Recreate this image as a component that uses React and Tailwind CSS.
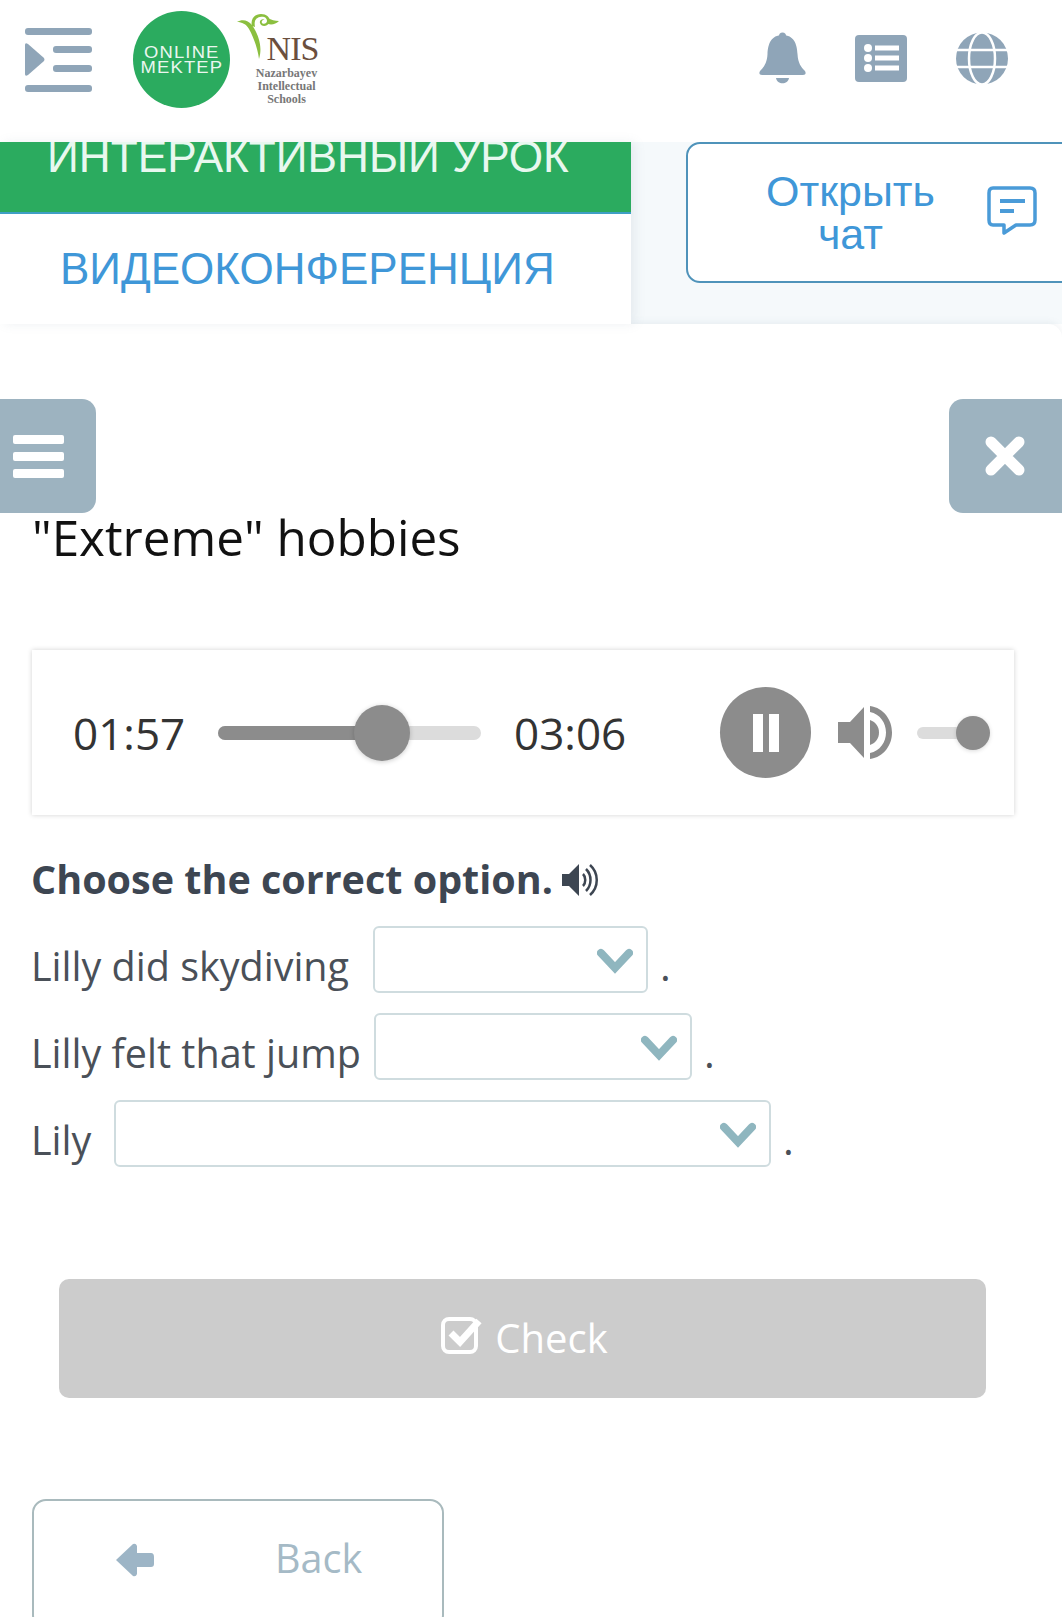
import React from "react";

const sans = "font-['Liberation_Sans',Arial,sans-serif]";
const open = "font-['Open_Sans','Noto_Sans',sans-serif]";

function MenuIcon() {
  return (
    <svg width="68" height="66" viewBox="0 0 68 66" fill="#8fa5b8">
      <rect x="0" y="0" width="67" height="7" rx="3" />
      <rect x="28" y="18" width="39" height="7" rx="3" />
      <rect x="28" y="37" width="39" height="7" rx="3" />
      <rect x="0" y="57" width="67" height="7" rx="3" />
      <path d="M0 17 Q0 14 3 16 L19 30 Q20 32 19 33 L3 47 Q0 49 0 46 Z" />
    </svg>
  );
}

function Sprout() {
  return (
    <svg width="44" height="46" viewBox="0 0 44 46" fill="#8bbf3f">
      <path d="M0 8 C5 5 11 6 15 11 C21 20 26 32 22 45 C21 36 17 24 12 15 C9 10 5 8 0 8 Z" />
      <path d="M15 12 C13 5 18 0 24 0 C31 0 34 5 32 9 C30 13 24 13 23 9 C22 6 26 4 28 6 C26 5 24 7 25 9 C27 11 30 9 30 7 C30 3 26 2 23 3 C18 4 17 8 18 13 Z" />
      <path d="M31 4 C34 6 38 7 42 7 C39 10 35 11 31 10 Z" />
    </svg>
  );
}

function Bell() {
  return (
    <svg width="47" height="53" viewBox="0 0 47 53" fill="#8fa5b8">
      <circle cx="23.5" cy="4" r="3.5" />
      <path d="M23.5 3 C12 3 9 12 8.5 22 C8 31 5 35 1 39 Q-1 43 3 43 L44 43 Q48 43 46 39 C42 35 39 31 38.5 22 C38 12 35 3 23.5 3 Z" />
      <path d="M17 46 L30 46 C29 53 18 53 17 46 Z" />
    </svg>
  );
}

function ListBox() {
  return (
    <svg width="52" height="47" viewBox="0 0 52 47">
      <rect width="52" height="47" rx="4" fill="#8fa5b8" />
      <g fill="#fff">
        <circle cx="13" cy="13" r="4" />
        <circle cx="13" cy="23" r="4" />
        <circle cx="13" cy="33" r="4" />
        <rect x="20" y="10.5" width="24" height="5" />
        <rect x="20" y="20.5" width="24" height="5" />
        <rect x="20" y="30.5" width="24" height="5" />
      </g>
    </svg>
  );
}

function Globe() {
  return (
    <svg width="52" height="53" viewBox="0 0 52 53">
      <circle cx="26" cy="26.5" r="26" fill="#8fa5b8" />
      <g fill="none" stroke="#fff" strokeWidth="2.5">
        <ellipse cx="26" cy="26.5" rx="13" ry="26" />
        <path d="M0 18 H52 M0 35 H52" />
      </g>
    </svg>
  );
}

function ChatIcon() {
  return (
    <svg width="50" height="50" viewBox="0 0 50 50" fill="none" stroke="#4a9bd8">
      <path d="M6 2 H43 Q48 2 48 7 V34 Q48 39 43 39 H29 L17 47 V39 H6 Q2 39 2 34 V7 Q2 2 6 2 Z" strokeWidth="3.5" strokeLinejoin="round" />
      <path d="M13 15 H38" strokeWidth="4" />
      <path d="M13 25 H27" strokeWidth="4" />
    </svg>
  );
}

function BurgerIcon() {
  return (
    <div className="flex flex-col gap-[8px]">
      <div className="w-[51px] h-[9px] bg-white rounded-[2px]" />
      <div className="w-[51px] h-[9px] bg-white rounded-[2px]" />
      <div className="w-[51px] h-[9px] bg-white rounded-[2px]" />
    </div>
  );
}

function CloseIcon() {
  return (
    <svg width="40" height="40" viewBox="0 0 40 40" stroke="#fff" strokeWidth="11" strokeLinecap="round">
      <path d="M6 6 L34 34 M34 6 L6 34" />
    </svg>
  );
}

function Speaker() {
  return (
    <svg width="54" height="53" viewBox="0 0 54 53" fill="#8c8c8c">
      <path d="M0 16 H12 L26 1 V52 L12 37 H0 Z" />
      <path d="M32 0 C46 2 54 14 54 26.5 C54 39 46 51 32 53 V47 C42 45 48 36 48 26.5 C48 17 42 8 32 6 Z" />
      <path d="M32 14 C38 16 41 21 41 26.5 C41 32 38 37 32 39 Z" />
    </svg>
  );
}

function SmallSpeaker() {
  return (
    <svg width="38" height="34" viewBox="0 0 38 34" fill="#3d4652">
      <path d="M0 11 H7 L17 1 V33 L7 23 H0 Z" />
      <g fill="none" stroke="#3d4652" strokeWidth="2.5">
        <path d="M21 11 C24 14 24 20 21 23" />
        <path d="M24 6 C30 12 30 22 24 28" />
        <path d="M28 2 C37 10 37 24 28 32" />
      </g>
    </svg>
  );
}

function Chevron() {
  return (
    <svg width="36" height="26" viewBox="0 0 36 26" fill="none" stroke="#8fb6bf" strokeWidth="8" strokeLinecap="round" strokeLinejoin="miter">
      <path d="M4 5 L18 20 L32 5" />
    </svg>
  );
}

function CheckIcon() {
  return (
    <svg width="42" height="37" viewBox="0 0 42 37" fill="none">
      <rect x="2" y="2" width="33" height="33" rx="6" stroke="#fff" strokeWidth="4" />
      <path d="M10 16 L19 25 L38 4" stroke="#fff" strokeWidth="7" />
    </svg>
  );
}

function BackArrow() {
  return (
    <svg width="40" height="34" viewBox="0 0 40 34" fill="#9db5c6">
      <path d="M18 1 L1 17 L18 33 Q21 34 22 31 L22 24 H36 Q39 24 39 21 V14 Q39 10 36 10 H22 V3 Q21 0 18 1 Z" />
    </svg>
  );
}

function Row({ label, width, gap, mb }) {
  return (
    <div className={`flex items-start h-[67px] ${mb}`}>
      <span className={`shrink-0 whitespace-nowrap text-[39.5px] leading-[67px] text-[#4a5058] pt-[7px] ${gap}`}>{label}</span>
      <div className={`h-[67px] ${width} border-2 border-[#cfdcdf] rounded-[6px] bg-white flex items-start justify-end pr-[13px] pt-[20px]`}>
        <Chevron />
      </div>
      <span className="text-[41px] leading-[67px] text-[#4a5058] pl-[12px] pt-[6px]">.</span>
    </div>
  );
}

export default function App() {
  return (
    <div className={`w-[1062px] h-[1617px] overflow-hidden bg-white ${open}`}>
      <header className="h-[142px] bg-white flex items-start">
        <div className="ml-[25px] mt-[28px] w-[108px]"><MenuIcon /></div>
        <div className={`mt-[11px] w-[97px] h-[97px] rounded-full bg-[#2bab5f] flex flex-col items-center justify-center text-white text-[16px] leading-[15px] tracking-[1px] ${sans}`}>
          <span className="scale-x-[1.15] opacity-90">ONLINE</span>
          <span className="scale-x-[1.15] opacity-90">MEKTEP</span>
        </div>
        <div className="relative ml-[7px] mt-[14px] w-[86px] h-[92px] flex flex-col items-center font-['Liberation_Serif',serif]">
          <div className="absolute left-0 top-0"><Sprout /></div>
          <span className="pl-[25px] pt-[21px] text-[34px] leading-[28px] text-[#6b4f3e] tracking-[-1px]">NIS</span>
          <span className="pl-[13px] mt-[4px] text-[12px] leading-[13px] text-[#777] font-bold text-center whitespace-nowrap">Nazarbayev<br />Intellectual<br />Schools</span>
        </div>
        <div className="ml-auto mr-[54px] mt-[32px] flex items-center gap-[49px]">
          <Bell />
          <ListBox />
          <Globe />
        </div>
      </header>

      <section className={`flex h-[182px] bg-[#f5f9fb] ${sans}`}>
        <div className="w-[631px] shrink-0 bg-white shadow-[4px_0_10px_rgba(120,140,160,0.12)]">
          <div className="h-[72px] bg-[#2bab5f] border-b-2 border-[#3f9fc4] overflow-hidden">
            <p className="mt-[-11px] ml-[47px] text-[44.2px] leading-[52px] text-[#e8f8ef] whitespace-nowrap">ИНТЕРАКТИВНЫЙ УРОК</p>
          </div>
          <p className="mt-[29px] ml-[60px] text-[44px] leading-[52px] text-[#3f97d8] whitespace-nowrap">ВИДЕОКОНФЕРЕНЦИЯ</p>
        </div>
        <div className="ml-[55px] w-[420px] shrink-0 h-[141px] bg-white border-2 border-[#4f93ba] rounded-[14px] flex items-center">
          <div className="w-[299px] shrink-0 pl-[26px] text-center text-[#3f97d8] text-[43px] leading-[43px] whitespace-nowrap">Открыть<br />чат</div>
          <div className="mt-[-4px]"><ChatIcon /></div>
        </div>
      </section>

      <main className="bg-white rounded-tr-[14px] shadow-[0_-2px_6px_rgba(120,140,160,0.1)] h-[1293px]">
        <div className="pt-[75px] flex justify-between">
          <div className="w-[96px] h-[114px] bg-[#9db3c0] rounded-r-[14px] flex items-center pl-[13px]"><BurgerIcon /></div>
          <div className="w-[113px] h-[114px] bg-[#9db3c0] rounded-l-[14px] flex items-center pl-[36px]"><CloseIcon /></div>
        </div>

        <h1 className="ml-[32px] text-[49.4px] leading-[58px] text-[#111] font-normal mt-[-5px]">"Extreme" hobbies</h1>

        <div className="ml-[32px] mt-[84px] w-[982px] h-[165px] bg-white shadow-[0_0_5px_rgba(0,0,0,0.18)] flex items-center text-[#333]">
          <span className="ml-[41px] w-[145px] shrink-0 text-[44px] leading-[50px]">01:57</span>
          <div className="w-[263px] shrink-0 h-[14px] bg-[#dcdcdc] rounded-full flex items-center">
            <div className="w-[164px] shrink-0 h-[14px] bg-[#8c8c8c] rounded-full" />
            <div className="ml-[-28px] w-[56px] h-[56px] shrink-0 rounded-full bg-[#8c8c8c] shadow-[0_1px_5px_rgba(0,0,0,0.2)]" />
          </div>
          <span className="ml-[33px] w-[206px] shrink-0 text-[44px] leading-[50px]">03:06</span>
          <div className="w-[91px] h-[91px] rounded-full bg-[#8c8c8c] flex items-center justify-center gap-[6px] shrink-0">
            <div className="w-[10px] h-[38px] bg-white" />
            <div className="w-[10px] h-[38px] bg-white" />
          </div>
          <div className="ml-[27px]"><Speaker /></div>
          <div className="ml-[25px] w-[64px] shrink-0 h-[12px] bg-[#dcdcdc] rounded-full flex items-center justify-end">
            <div className="mr-[-9px] w-[34px] h-[34px] shrink-0 rounded-full bg-[#8c8c8c] shadow-[0_1px_4px_rgba(0,0,0,0.15)]" />
          </div>
        </div>

        <div className="ml-[31px] mt-[34px] flex items-center h-[60px]">
          <h2 className="text-[39.5px] leading-[60px] font-bold text-[#3d4652]">Choose the correct option.</h2>
          <div className="ml-[9px] mt-[2px]"><SmallSpeaker /></div>
        </div>

        <div className="ml-[31px] mt-[17px]">
          <Row label="Lilly did skydiving" width="w-[275px]" gap="w-[342px]" mb="mb-[20px]" />
          <Row label="Lilly felt that jump" width="w-[318px]" gap="w-[343px]" mb="mb-[20px]" />
          <Row label="Lily" width="w-[657px]" gap="w-[83px]" mb="" />
        </div>

        <div className="ml-[59px] mt-[112px] w-[927px] h-[119px] bg-[#cccccc] rounded-[10px] flex items-center justify-center text-white text-[40px] leading-[50px] gap-[12px]">
          <div className="mt-[-6px] ml-[4px]"><CheckIcon /></div>
          <span className="mt-[-2px]">Check</span>
        </div>

        <div className="ml-[32px] mt-[101px] w-[412px] h-[130px] border-2 border-[#a9babd] rounded-[14px] flex items-start pt-[38px] pl-[82px]">
          <div className="pt-[4px] ml-[-1px]"><BackArrow /></div>
          <span className="ml-[120px] text-[39.5px] leading-[38px] text-[#a5bac6]">Back</span>
        </div>
      </main>
    </div>
  );
}
